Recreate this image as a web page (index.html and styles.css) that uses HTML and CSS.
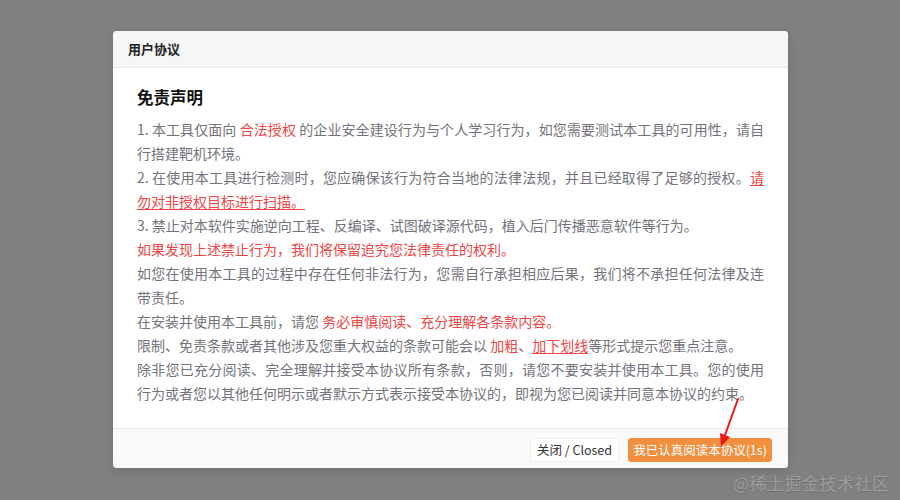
FILE: index.html
```html
<!DOCTYPE html>
<html lang="zh-CN">
<head>
<meta charset="utf-8">
<title>用户协议</title>
<link rel="stylesheet" href="styles.css">
</head>
<body>
<div class="modal">
  <div class="modal-header">用户协议</div>
  <div class="modal-body">
    <h3 class="title">免责声明</h3>
    <div class="terms">
      <p>1. 本工具仅面向 <span class="red">合法授权</span> 的企业安全建设行为与个人学习行为，如您需要测试本工具的可用性，请自行搭建靶机环境。</p>
      <p>2. 在使用本工具进行检测时，您应确保该行为符合当地的法律法规，并且已经取得了足够的授权。<span class="red ul">请勿对非授权目标进行扫描。</span></p>
      <p>3. 禁止对本软件实施逆向工程、反编译、试图破译源代码，植入后门传播恶意软件等行为。</p>
      <p class="red">如果发现上述禁止行为，我们将保留追究您法律责任的权利。</p>
      <p>如您在使用本工具的过程中存在任何非法行为，您需自行承担相应后果，我们将不承担任何法律及连带责任。</p>
      <p>在安装并使用本工具前，请您 <span class="red">务必审慎阅读、充分理解各条款内容。</span></p>
      <p>限制、免责条款或者其他涉及您重大权益的条款可能会以 <span class="red">加粗</span>、<span class="red ul">加下划线</span>等形式提示您重点注意。</p>
      <p>除非您已充分阅读、完全理解并接受本协议所有条款，否则，请您不要安装并使用本工具。您的使用行为或者您以其他任何明示或者默示方式表示接受本协议的，即视为您已阅读并同意本协议的约束。</p>
    </div>
  </div>
  <div class="modal-footer">
    <button class="btn btn-default">关闭 / Closed</button>
    <button class="btn btn-primary">我已认真阅读本协议(1s)</button>
  </div>
</div>
<svg class="arrow" width="40" height="60" viewBox="0 0 40 60">
  <line x1="32" y1="4" x2="19" y2="40" stroke="#e8191b" stroke-width="2" stroke-linecap="round"/>
  <polygon points="14,38 24,42 15,52" fill="#e8191b"/>
</svg>
<div class="watermark">@稀土掘金技术社区</div>
</body>
</html>
```
FILE: styles.css
```css
html, body {
  margin: 0;
  padding: 0;
}
body {
  background: #808080;
  width: 900px;
  height: 500px;
  overflow: hidden;
  position: relative;
  font-family: "Noto Sans CJK SC", "Noto Sans", sans-serif;
  padding-top: 31px;
  box-sizing: border-box;
}
.modal {
  width: 675px;
  margin: 0 auto 0 113px;
  background: #fff;
  border-radius: 4px;
  overflow: hidden;
  box-shadow: 0 2px 10px rgba(0,0,0,0.15);
}
.modal-header {
  height: 36px;
  line-height: 36px;
  padding: 0 15px;
  background: #f6f6f6;
  border-bottom: 1px solid #e6e6e6;
  font-size: 13px;
  font-weight: 600;
  color: #222;
}
.modal-body {
  padding: 17px 24px 23px;
}
.title {
  margin: 0 0 8px;
  font-size: 16.5px;
  line-height: 24px;
  font-weight: 700;
  color: #111;
}
.terms {
  font-size: 14px;
  line-height: 24px;
  color: #73737b;
  text-align: justify;
}
.terms p {
  margin: 0;
}
.red {
  color: #ec4646;
}
.ul {
  text-decoration: underline;
  text-underline-offset: 2px;
}
.modal-footer {
  height: 39px;
  border-top: 1px solid #ececec;
  background: #f9f9f9;
  display: flex;
  justify-content: flex-end;
  align-items: center;
  gap: 9px;
  padding: 0 16px;
}
.btn {
  box-sizing: border-box;
  height: 24px;
  font-family: "Noto Sans CJK SC", "Noto Sans", sans-serif;
  font-size: 12.5px;
  line-height: 22px;
  padding: 0;
  border-radius: 3px;
  cursor: pointer;
  margin-top: 2px;
  white-space: nowrap;
  text-align: center;
}
.btn-default {
  background: #fff;
  border: 1px solid #efefef;
  color: #333;
  width: 89px;
}
.btn-primary {
  background: #f0903f;
  border: 1px solid #f0903f;
  color: #fff;
  width: 144px;
}
.arrow {
  position: absolute;
  left: 706px;
  top: 395px;
}
.watermark {
  position: absolute;
  left: 733px;
  top: 471px;
  font-size: 17px;
  line-height: 24px;
  color: #9c9c9c;
  text-shadow: 0 1px 0 #6e6e6e;
  letter-spacing: 0.5px;
}
```
